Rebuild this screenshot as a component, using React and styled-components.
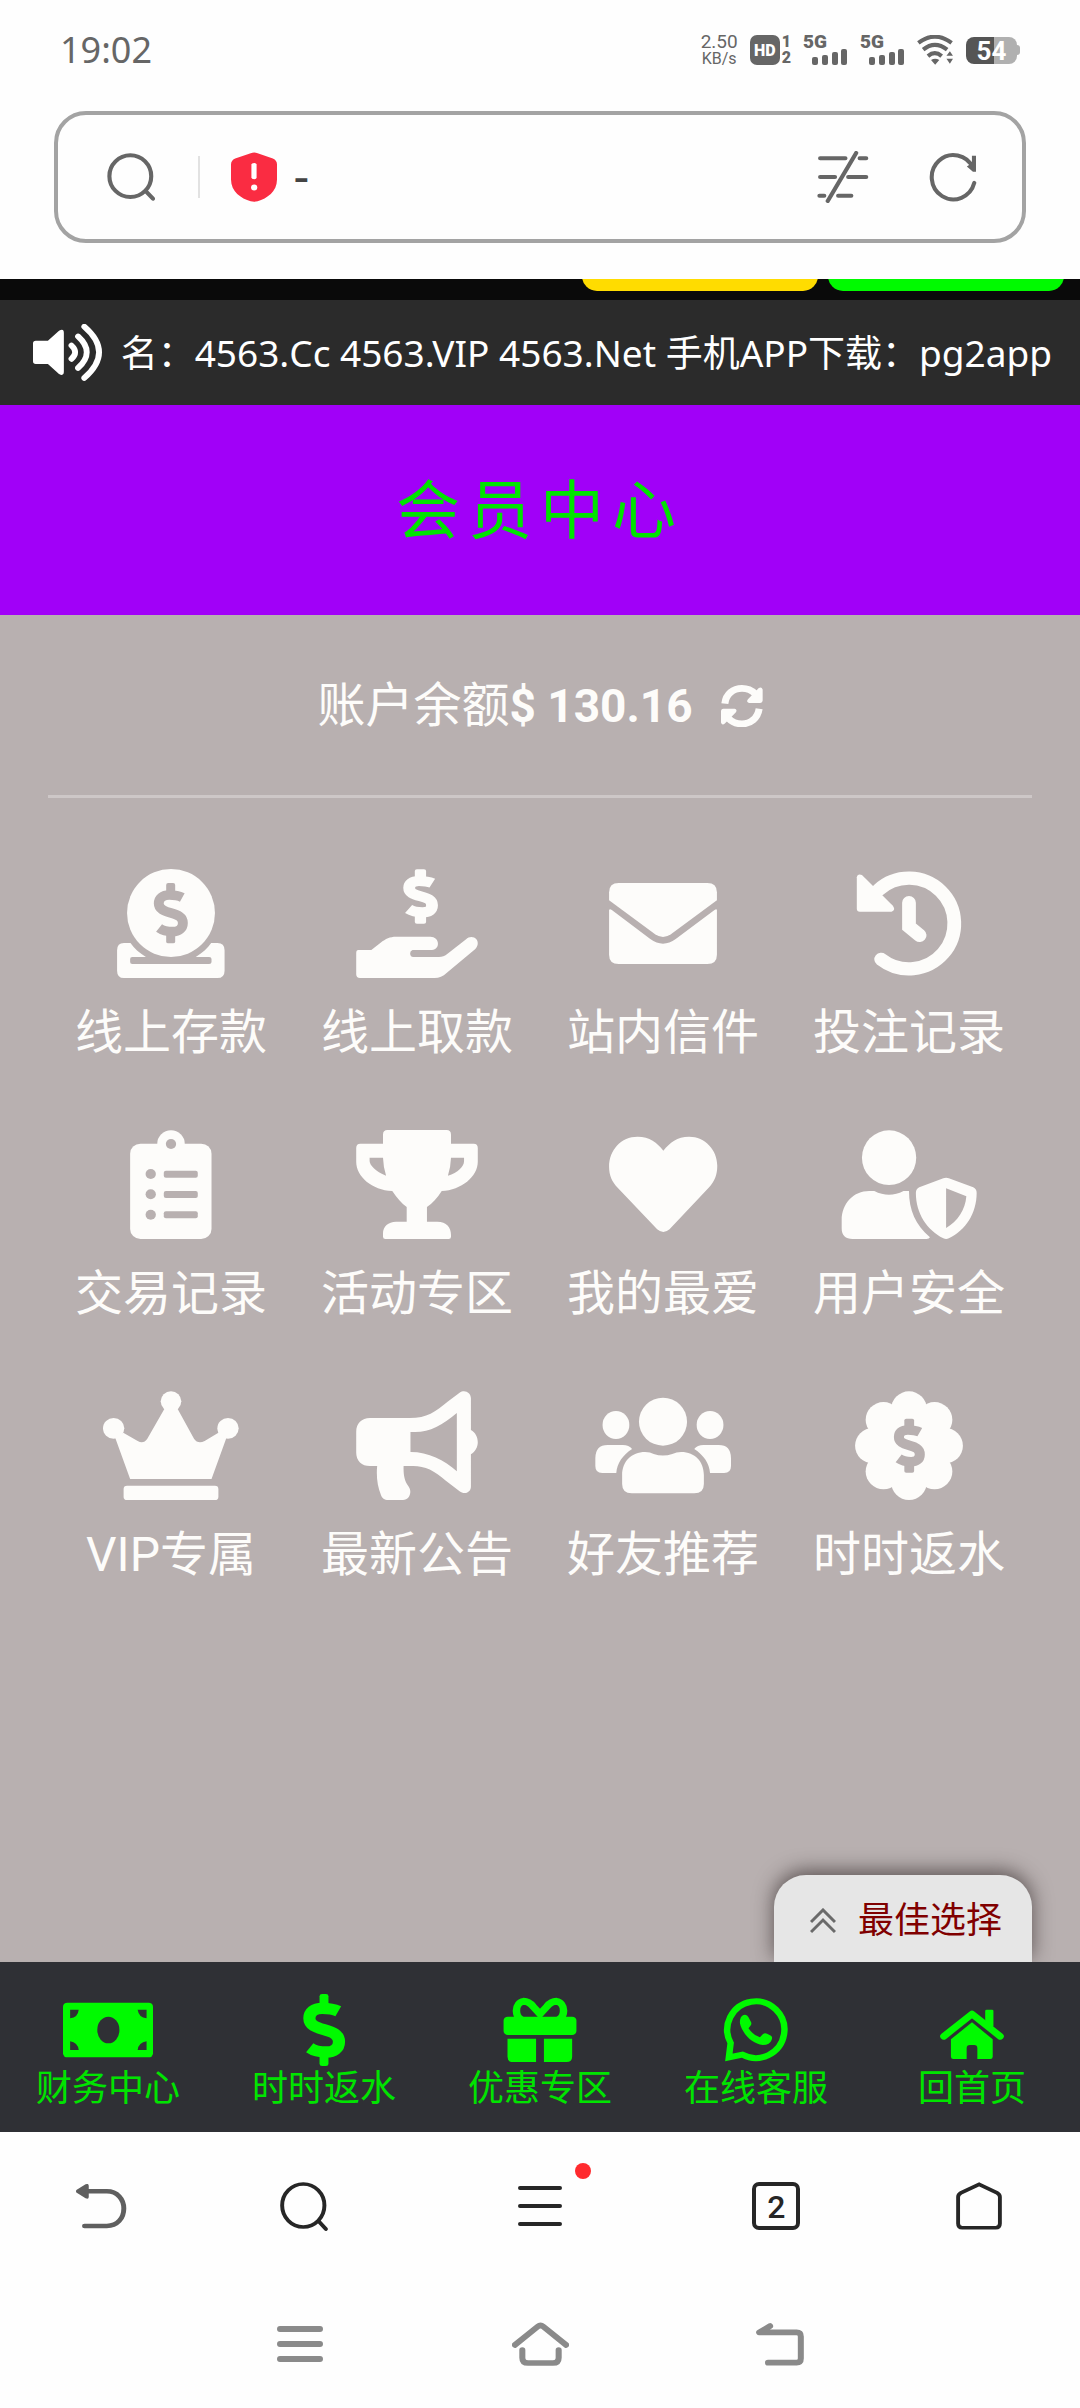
import React from "react";
import styled, { createGlobalStyle } from "styled-components";

const color = {
  panel: "#b8b0b0",
  ivory: "#fdfcfa",
  neon: "#00fa00",
  neonText: "#00e400",
  status: "#666666",
  ink: "#262626",
  system: "#8a8a8a",
};

const GlobalStyle = createGlobalStyle`
  *, *::before, *::after { box-sizing: border-box; }
  body {
    margin: 0;
    background: #fefefe;
    font-family: Roboto, "Noto Sans CJK SC", sans-serif;
  }
  button { font: inherit; color: inherit; background: none; border: 0; padding: 0; cursor: pointer; }
  a { color: inherit; text-decoration: none; }
  svg { display: block; flex: none; }
`;

const Screen = styled.div`
  display: flex;
  flex-direction: column;
  min-height: 100vh;
`;

/* ---------- status bar ---------- */

const StatusBar = styled.header`
  display: flex;
  align-items: center;
  justify-content: space-between;
  height: 100px;
  padding: 0 60px;
  color: ${color.status};
`;

const Clock = styled.time`
  font-family: "Noto Sans", sans-serif;
  font-size: 36px;
  line-height: 40px;
`;

const StatusIcons = styled.div`
  display: flex;
  align-items: center;
  gap: 12px;
`;

const NetSpeed = styled.div`
  display: flex;
  flex-direction: column;
  align-items: center;
  font-size: 19px;
  line-height: 18px;
  small { font-size: 16px; line-height: 16px; }
`;

const HdGroup = styled.div`
  display: flex;
  align-items: center;
  gap: 2px;
`;

const HdBadge = styled.span`
  width: 30px;
  height: 30px;
  border-radius: 7px;
  background: ${color.status};
  color: #fff;
  font-size: 16px;
  font-weight: 900;
  line-height: 31px;
  text-align: center;
`;

const SimNumbers = styled.span`
  display: flex;
  flex-direction: column;
  align-items: center;
  font-size: 16px;
  font-weight: 900;
  line-height: 16px;
`;

const SignalBox = styled.div`
  display: flex;
  flex-direction: column;
  width: 45px;
  height: 30px;
  font-size: 19px;
  font-weight: 900;
  line-height: 14px;
  svg { align-self: flex-end; }
`;

const Battery = styled.div`
  display: flex;
  align-items: center;
  &::after {
    content: "";
    width: 3px;
    height: 10px;
    border-radius: 0 3px 3px 0;
    background: #b0b0b0;
  }
`;

const BatteryBody = styled.span`
  width: 51px;
  height: 27px;
  border-radius: 8px;
  background: linear-gradient(90deg, #555 54%, #b0b0b0 54%);
  color: #fff;
  font-size: 26px;
  font-weight: 700;
  line-height: 28px;
  text-align: center;
`;

/* ---------- address bar ---------- */

const AddressRow = styled.div`
  padding: 11px 54px 36px;
`;

const AddressBar = styled.form`
  display: flex;
  align-items: center;
  height: 132px;
  padding: 0 45px 0 49px;
  border: 4px solid #a3a3a3;
  border-radius: 32px;
  color: ${color.status};
`;

const AddressDivider = styled.span`
  width: 2px;
  height: 42px;
  margin: 0 31px 0 43px;
  background: #e2e2e2;
`;

const AddressInput = styled.input`
  flex: 1;
  min-width: 0;
  padding: 2px 16px 0;
  border: 0;
  outline: 0;
  background: none;
  color: #444;
  font: 600 36px/48px Inter, sans-serif;
`;

const AddressActions = styled.div`
  display: flex;
  gap: 60px;
`;

/* ---------- page top ---------- */

const PromoStrip = styled.div`
  display: flex;
  justify-content: flex-end;
  align-items: flex-end;
  gap: 10px;
  height: 21px;
  padding: 0 16px 9px;
  overflow: hidden;
  background: #0a0a0a;
`;

const PromoEdge = styled.span`
  width: 236px;
  height: 48px;
  flex: none;
  border-radius: 15px;
  background: ${(p) => p.$tone};
`;

const Notice = styled.div`
  display: flex;
  align-items: center;
  gap: 12px;
  height: 105px;
  padding: 0 28px 0 33px;
  background: #2b2b2b;
  color: #fff;
`;

const NoticeText = styled.p`
  flex: 1;
  display: flex;
  justify-content: flex-end;
  margin: 0;
  font-family: "Noto Sans", "Noto Sans CJK SC", sans-serif;
  font-size: 37px;
  line-height: 52px;
  white-space: nowrap;
`;

const TitleBar = styled.div`
  display: flex;
  align-items: center;
  justify-content: center;
  height: 210px;
  padding-top: 4px;
  background: #a100f8;
`;

const Title = styled.h1`
  margin: 0;
  color: ${color.neonText};
  font-size: 64px;
  font-weight: 400;
  line-height: 80px;
  letter-spacing: 8px;
`;

/* ---------- member panel ---------- */

const Panel = styled.main`
  flex: 1;
  display: flex;
  flex-direction: column;
  padding: 0 48px;
  overflow: hidden;
  background: ${color.panel};
  color: ${color.ivory};
`;

const Balance = styled.section`
  display: flex;
  align-items: center;
  justify-content: center;
  padding: 61px 0 59px;
  border-bottom: 3px solid #cdc7c7;
  font-size: 48px;
  line-height: 60px;
  strong { font-size: 46px; font-weight: 700; }
  button { margin-left: 28px; }
`;

const MenuGrid = styled.nav`
  display: grid;
  grid-template-columns: repeat(4, 1fr);
  row-gap: 67px;
  padding-top: 71px;
`;

const MenuItem = styled.a`
  display: flex;
  flex-direction: column;
  align-items: center;
  gap: 25px;
  font-size: 48px;
  line-height: 60px;
  white-space: nowrap;
`;

const PickTab = styled.button`
  display: flex;
  align-items: center;
  gap: 22px;
  height: 87px;
  margin-top: auto;
  align-self: flex-end;
  && {
    padding: 5px 30px 0 36px;
    background: #e6e6e6;
    color: #800000;
    font-size: 36px;
    line-height: 48px;
  }
  border-radius: 32px 32px 0 0;
  box-shadow: 0 -4px 20px rgba(40, 30, 30, 0.65);
`;

/* ---------- site tab bar ---------- */

const SiteTabs = styled.nav`
  display: grid;
  grid-template-columns: repeat(5, 1fr);
  padding: 32px 0 22px;
  background: #2f3035;
`;

const SiteTab = styled.a`
  display: flex;
  flex-direction: column;
  align-items: center;
  gap: 2px;
  color: ${color.neonText};
  font-size: 36px;
  line-height: 42px;
  svg { color: ${color.neon}; }
`;

/* ---------- browser and system bars ---------- */

const BrowserBar = styled.nav`
  display: grid;
  grid-template-columns: 3fr 3fr 4fr 3fr 3fr;
  place-items: center;
  height: 148px;
  color: ${color.ink};
`;

const BarButton = styled.button`
  display: grid;
  place-items: center;
  position: relative;
  width: 104px;
  height: 88px;
`;

const Dot = styled.span`
  position: absolute;
  top: 1px;
  right: 1px;
  width: 16px;
  height: 16px;
  border-radius: 50%;
  background: #ff2a2e;
`;

const TabCount = styled.span`
  width: 48px;
  height: 48px;
  border: 4px solid ${color.ink};
  border-radius: 7px;
  font-size: 32px;
  font-weight: 500;
  line-height: 42px;
  text-align: center;
`;

const SystemBar = styled.nav`
  display: grid;
  grid-template-columns: repeat(3, 1fr);
  place-items: center;
  height: 128px;
  padding: 0 calc(100% / 6);
  color: ${color.system};
`;

/* ---------- drawings ---------- */

const stroke = (width, cap = "round") => ({
  fill: "none",
  stroke: "currentColor",
  strokeWidth: width,
  strokeLinecap: cap,
});

const Drawing = ({ box, w, h, children }) => (
  <svg viewBox={box} width={w} height={h} preserveAspectRatio="none" fill="currentColor" aria-hidden="true">
    {children}
  </svg>
);

const MenuDrawing = ({ box, children }) => (
  <Drawing box={`${box} 396 327`} w={136} h={109}>{children}</Drawing>
);

const TabDrawing = ({ box, children }) => (
  <Drawing box={`${box} 162 252 216`} w={90} h={72}>{children}</Drawing>
);

/* Dollar sign in a 117 x 216 cell; t is the curve's thickness, bar the stem's. */
const Dollar = ({ x, y, sx = 1, sy = 1, t = 34, bar = 25, tone = "currentColor" }) => {
  const l = t / 2;
  const r = 117 - l;
  const top = 26 + l;
  const bottom = 191 - l;
  return (
    <g transform={`translate(${x} ${y}) scale(${sx} ${sy})`}>
      <rect x={58 - bar / 2} y="0" width={bar} height="50" rx="7" fill={tone} />
      <rect x={58 - bar / 2} y="166" width={bar} height="50" rx="7" fill={tone} />
      <path
        d={`M98 ${top + 9} C85 ${top + 2} 70 ${top} 53 ${top} C30 ${top} ${l} ${top + 12} ${l} 73 C${l} 93 35 100 58 107 C82 114 ${r} 121 ${r} 143 C${r} 163 85 ${bottom} 65 ${bottom} C45 ${bottom} 30 ${bottom - 4} 18 ${bottom - 13}`}
        fill="none"
        stroke={tone}
        strokeWidth={t}
      />
    </g>
  );
};

const DepositIcon = () => (
  <MenuDrawing box="299 687">
    <ellipse cx="497" cy="819" rx="128" ry="132" />
    <Dollar x={447} y={729} sx={0.846} sy={0.838} bar={31} tone={color.panel} />
    <path d="M360 909H379C389 925 405 939 424 951H384Q378 951 378 957V966Q378 972 384 972H608Q615 972 615 966V957Q615 951 608 951H569C588 939 604 925 614 909H632Q653 909 653 931V992Q653 1014 632 1014H360Q340 1014 340 992V931Q340 909 360 909Z" />
  </MenuDrawing>
);

const WithdrawIcon = () => (
  <MenuDrawing box="1013 687">
    <Dollar x={1171} y={688} sx={0.863} sy={0.755} t={40} bar={38} />
    <path d="M1040 930H1078L1105 908C1120 896 1132 890 1150 890H1250C1263 890 1272 899 1272 911C1272 923 1263 930 1250 930H1198Q1191 932 1191 940Q1191 951 1200 951H1275C1285 951 1291 949 1298 943L1354 898C1362 889 1376 888 1384 898C1391 908 1388 920 1380 928L1298 998C1286 1009 1276 1014 1262 1014H1045Q1034 1014 1034 1003V940Q1034 930 1040 930Z" />
  </MenuDrawing>
);

const MailIcon = () => (
  <MenuDrawing box="159 687">
    <path d="M228 729H486Q514 729 514 757V781L380 883Q357 899 334 883L200 781V757Q200 729 228 729Z" />
    <path d="M200 810Q202 805 208 810L320 897Q357 925 394 897L507 810Q513 805 514 810V944Q514 972 486 972H228Q200 972 200 944Z" />
  </MenuDrawing>
);

const HistoryIcon = () => (
  <MenuDrawing box="873 687">
    <path d="M982 750A132 136 0 1 1 990 958" {...stroke(40)} />
    <path d="M919 712Q921 700 934 705L1024 797Q1033 810 1020 815H928Q919 815 919 806Z" />
    <path d="M1071 788V860L1102 886" {...stroke(40)} />
  </MenuDrawing>
);

const RecordIcon = () => (
  <MenuDrawing box="299 90">
    <rect x="378" y="131" width="237" height="286" rx="30" />
    <circle cx="497" cy="131" r="40" />
    <g fill={color.panel}>
      <circle cx="497" cy="132" r="15" />
      {[222, 283, 344].map((y) => (
        <React.Fragment key={y}>
          <circle cx="438" cy={y} r="15" />
          <rect x="476" y={y - 10} width="99" height="21" rx="6" />
        </React.Fragment>
      ))}
    </g>
  </MenuDrawing>
);

const TrophyIcon = () => (
  <MenuDrawing box="1013 90">
    <path
      fillRule="evenodd"
      d="M1125 90H1297Q1310 90 1310 104V131H1376Q1388 131 1388 144V185C1388 230 1340 270 1283 273C1270 295 1256 310 1240 321V365H1270C1297 365 1310 382 1310 405V410Q1310 417 1303 417H1119Q1112 417 1112 410V400C1112 380 1127 365 1150 365H1181V321C1166 310 1153 295 1139 273C1080 270 1034 230 1034 185V144Q1034 131 1046 131H1112V104Q1112 90 1125 90ZM1073 173H1112Q1113 202 1121 227C1090 215 1073 195 1073 183ZM1310 173H1348V183C1348 200 1330 218 1301 227Q1309 202 1310 173Z"
    />
  </MenuDrawing>
);

const HeartIcon = () => (
  <MenuDrawing box="159 90">
    <path d="M358 152C340 128 318 110 283 110C235 110 200 150 200 200C200 225 208 245 225 263L340 388Q358 404 376 388L490 263C507 245 515 225 515 197C515 150 480 110 433 110C398 110 377 128 358 152Z" />
  </MenuDrawing>
);

const UserShieldIcon = () => (
  <MenuDrawing box="873 90">
    <ellipse cx="1013" cy="173" rx="79" ry="82" />
    <path d="M955 273H970Q1013 296 1055 273H1071C1071 330 1090 375 1132 412Q1130 417 1122 417H907Q875 417 875 385V360C875 310 910 273 955 273Z" />
    <path
      fillRule="evenodd"
      d="M1171 235Q1179 231 1187 235L1258 262Q1268 267 1268 279C1268 340 1235 392 1187 415Q1179 419 1171 415C1123 390 1091 340 1091 279Q1091 267 1101 262ZM1179 265L1238 289C1235 330 1212 365 1179 384Z"
    />
  </MenuDrawing>
);

const CrownIcon = () => (
  <MenuDrawing box="299 873">
    <circle cx="497" cy="904" r="30" />
    <circle cx="330" cy="985" r="31" />
    <circle cx="663" cy="985" r="31" />
    <path d="M478 926L428 1016Q417 1033 400 1023L358 998L334 1012L378 1137H615L659 1012L635 998L595 1023Q575 1033 564 1016L516 926Z" />
    <rect x="359" y="1157" width="276" height="43" rx="10" />
  </MenuDrawing>
);

const MegaphoneIcon = () => (
  <MenuDrawing box="1013 873">
    <path
      fillRule="evenodd"
      d="M1074 954H1190C1240 954 1265 935 1300 905L1335 878C1350 867 1368 878 1368 895V990C1381 997 1388 1012 1388 1027C1388 1042 1381 1055 1368 1063V1160C1368 1176 1350 1186 1335 1174L1295 1142C1262 1112 1235 1098 1200 1098H1172C1171 1125 1175 1145 1187 1160C1197 1175 1190 1200 1170 1200H1128C1115 1200 1110 1195 1106 1185C1096 1160 1092 1130 1095 1098H1074C1050 1098 1034 1082 1034 1058V995C1034 970 1050 954 1074 954ZM1192 996V1056C1245 1056 1290 1080 1327 1114V939C1285 975 1250 996 1205 996Z"
    />
  </MenuDrawing>
);

const FriendsIcon = () => (
  <MenuDrawing box="159 873">
    <ellipse cx="357" cy="965" rx="70" ry="72" />
    <ellipse cx="220" cy="975" rx="39" ry="42" />
    <ellipse cx="494" cy="975" rx="39" ry="42" />
    <path d="M305 1056Q320 1056 330 1062Q357 1071 384 1062Q396 1056 410 1056C450 1056 476 1085 476 1125V1152Q476 1180 448 1180H266Q238 1180 238 1152V1125C238 1085 265 1056 305 1056Z" />
    <path d="M196 1035H240Q258 1035 267 1047C240 1065 223 1090 221 1119H180Q160 1119 160 1098V1075Q160 1035 196 1035Z" />
    <path d="M519 1035H475Q457 1035 448 1047C475 1065 492 1090 494 1119H535Q555 1119 555 1098V1075Q555 1035 519 1035Z" />
  </MenuDrawing>
);

const RebateIcon = () => (
  <MenuDrawing box="873 873">
    <ellipse cx="1071" cy="1037" rx="110" ry="114" />
    {[0, 45, 90, 135, 180, 225, 270, 315].map((deg) => (
      <ellipse
        key={deg}
        cx={1071 + 105 * Math.cos((deg * Math.PI) / 180)}
        cy={1037 + 110 * Math.sin((deg * Math.PI) / 180)}
        rx="52"
        ry="53"
      />
    ))}
    <Dollar x={1027} y={956} sx={0.77} sy={0.75} t={38} bar={37} tone={color.panel} />
  </MenuDrawing>
);

const CashIcon = () => (
  <TabDrawing box="176">
    <rect x="176" y="188" width="252" height="164" rx="12" />
    <g fill="#2f3035">
      <ellipse cx="303" cy="270" rx="31" ry="40" />
      <path d="M196 209H220Q218 232 196 235ZM410 209H385Q388 232 410 235ZM196 330V304Q217 307 220 330ZM410 330V304Q388 307 385 330Z" />
    </g>
  </TabDrawing>
);

const DollarIcon = () => (
  <TabDrawing box="781">
    <Dollar x={849} y={162} />
  </TabDrawing>
);

const GiftIcon = () => (
  <TabDrawing box="-70">
    <rect x="-46" y="230" width="204" height="55" rx="12" />
    <path d="M-35 296H45V366H-20Q-35 366 -35 350ZM67 296H146V350Q146 366 130 366H67Z" />
    <path d="M56 222L75 200C84 188 92 184 102 184C114 186 122 198 122 212C122 224 118 232 110 238M56 222L37 200C28 188 20 184 10 184C-2 186 -10 198 -10 212C-10 224 -6 232 2 238" {...stroke(21)} />
  </TabDrawing>
);

const ChatIcon = () => (
  <TabDrawing box="535">
    <path d="M590 309A80 85 0 1 1 623 344L585 352Z" {...stroke(18)} />
    <path d="M626 225Q636 222 640 232L647 246Q650 252 645 258L640 265Q652 285 672 292L680 283Q685 278 692 281L703 287Q708 291 705 299Q700 315 680 315C650 312 622 280 616 250Q615 230 626 225Z" />
  </TabDrawing>
);

const HouseIcon = () => (
  <TabDrawing box="1140">
    <path d="M1187 289L1266 222L1345 289" {...stroke(20)} strokeLinejoin="round" />
    <rect x="1303" y="209" width="23" height="52" rx="4" />
    <path d="M1207 298L1266 247L1324 298V350Q1324 357 1317 357H1281V325Q1281 315 1272 315H1260Q1251 315 1251 325V357H1214Q1207 357 1207 350Z" />
  </TabDrawing>
);

const SpeakerIcon = () => (
  <Drawing box="97 166 199 170" w={69} h={57}>
    <path d="M105 216H140L172 186Q186 178 186 192V308Q186 323 172 315L140 285H105Q97 285 97 277V224Q97 216 105 216Z" />
    <path d="M208 230Q229 250 208 270M227 203Q277 250 227 297M245 174Q330 250 245 327" {...stroke(17)} />
  </Drawing>
);

const RefreshIcon = () => (
  <Drawing box="520 134 120 124" w={42} h={42}>
    <path d="M531 189C534 160 555 144 580 144C597 144 608 150 618 160M629 204C625 232 604 249 580 249C563 249 551 243 541 232" {...stroke(20, "butt")} />
    <path d="M639 147V180Q639 187 632 187H600Q591 184 597 176L628 143Q636 138 639 147ZM520 245V212Q520 204 527 204H559Q568 207 562 215L531 248Q523 255 520 245Z" />
  </Drawing>
);

const ChevronsIcon = () => (
  <Drawing box="0 0 26 26" w={26} h={26}>
    <path d="M1 14L13 2L25 14M1 24L13 12L25 24" {...stroke(3, "butt")} stroke="#6a6a6a" />
  </Drawing>
);

const SearchIcon = () => (
  <Drawing box="310 455 140 145" w={48} h={48}>
    <ellipse cx="378" cy="525" rx="61" ry="63" {...stroke(12)} />
    <path d="M423 570L444 593" {...stroke(12)} />
  </Drawing>
);

const ShieldIcon = () => (
  <Drawing box="671 455 133 151" w={46} h={50}>
    <path fill="#fa2c42" d="M728 459Q738 454 748 459L792 475Q804 481 804 493V538C804 575 775 595 748 604Q738 607 728 604C700 595 671 575 671 538V493Q671 481 683 475Z" />
    <path d="M730 493Q730 488 738 488Q745 488 745 493V532Q745 537 738 537Q730 537 730 532Z" fill="#fff" />
    <circle cx="738" cy="562" r="9" fill="#fff" />
  </Drawing>
);

const ReaderOffIcon = () => (
  <Drawing box="804 452 150 158" w={52} h={52}>
    <path d="M813 474H886M927 474H946M813 531H856M894 531H946M811 588H825M865 588H903M917 458L835 604" {...stroke(12)} />
  </Drawing>
);

const ReloadIcon = () => (
  <Drawing box="1130 457 142 149" w={48} h={50}>
    <path d="M1260 504A64 66 0 1 0 1264 549" {...stroke(12)} />
    <path d="M1257 468H1269V516H1260L1242 500L1257 490Z" />
  </Drawing>
);

const SignalBars = () => (
  <svg viewBox="0 0 36 16" width="36" height="16" fill="currentColor" aria-hidden="true">
    <rect x="0" y="8" width="6" height="8" rx="2" />
    <rect x="10" y="6" width="6" height="10" rx="2" />
    <rect x="20" y="3" width="6" height="13" rx="2" />
    <rect x="29" y="0" width="6" height="16" rx="2" />
  </svg>
);

const WifiIcon = () => (
  <Drawing box="1098 105 108 88" w={37} h={30}>
    <path d="M1102 128Q1150 92 1199 128M1116 148Q1150 120 1186 148M1130 167Q1150 150 1170 167" {...stroke(12, "butt")} />
    <path d="M1139 178Q1151 172 1163 178L1151 192ZM1184 166L1194 153L1203 166ZM1184 175H1203L1194 189Z" />
  </Drawing>
);

const BackIcon = () => (
  <Drawing box="213 729 144 136" w={51} h={45}>
    <g color="#5f5f5f">
      <path d="M214 747L240 730Q249 726 249 735V768Q249 776 240 772L214 755Q212 751 214 747Z" fill="currentColor" />
      <path d="M245 751H300C330 751 348 775 348 803C348 832 330 856 300 856H237" {...stroke(14)} />
    </g>
  </Drawing>
);

const BarSearchIcon = () => (
  <Drawing box="783 728 134 146" w={48} h={49}>
    <ellipse cx="848" cy="798" rx="59" ry="64" {...stroke(11)} />
    <path d="M891 845L911 868" {...stroke(11)} />
  </Drawing>
);

const MenuLinesIcon = () => (
  <Drawing box="0 0 44 40" w={44} h={40}>
    <path d="M2 2H42M2 20H42M2 38H42" {...stroke(4)} />
  </Drawing>
);

const BarHomeIcon = () => (
  <Drawing box="1220 722 131 146" w={46} h={48}>
    <path d="M1286 729L1337 755Q1345 760 1345 768V848Q1345 861 1333 861H1238Q1226 861 1226 848V768Q1226 760 1234 755Z" {...stroke(11)} />
  </Drawing>
);

const SystemRecentsIcon = () => (
  <Drawing box="0 0 46 36" w={46} h={36}>
    <path d="M3 3H43M3 18H43M3 33H43" {...stroke(6)} />
  </Drawing>
);

const SystemHomeIcon = () => (
  <Drawing box="1432 1138 160 132" w={57} h={44}>
    <path d="M1440 1207L1504 1152Q1512 1145 1520 1152L1584 1207M1461 1222V1245Q1461 1261 1477 1261H1547Q1563 1261 1563 1245V1222" {...stroke(17)} />
  </Drawing>
);

const SystemBackIcon = () => (
  <Drawing box="660 1142 136 128" w={48} h={43}>
    <path d="M700 1151L669 1170H775Q787 1170 787 1182V1248Q787 1260 775 1260H694" {...stroke(17)} strokeLinejoin="round" />
  </Drawing>
);

/* ---------- content ---------- */

const menu = [
  ["线上存款", DepositIcon],
  ["线上取款", WithdrawIcon],
  ["站内信件", MailIcon],
  ["投注记录", HistoryIcon],
  ["交易记录", RecordIcon],
  ["活动专区", TrophyIcon],
  ["我的最爱", HeartIcon],
  ["用户安全", UserShieldIcon],
  ["VIP专属", CrownIcon],
  ["最新公告", MegaphoneIcon],
  ["好友推荐", FriendsIcon],
  ["时时返水", RebateIcon],
];

const tabs = [
  ["财务中心", CashIcon],
  ["时时返水", DollarIcon],
  ["优惠专区", GiftIcon],
  ["在线客服", ChatIcon],
  ["回首页", HouseIcon],
];

const Signal = () => (
  <SignalBox>
    5G
    <SignalBars />
  </SignalBox>
);

export default function App() {
  return (
    <Screen>
      <GlobalStyle />

      <StatusBar>
        <Clock>19:02</Clock>
        <StatusIcons>
          <NetSpeed>
            2.50
            <small>KB/s</small>
          </NetSpeed>
          <HdGroup>
            <HdBadge>HD</HdBadge>
            <SimNumbers>
              <span>1</span>
              <span>2</span>
            </SimNumbers>
          </HdGroup>
          <Signal />
          <Signal />
          <WifiIcon />
          <Battery>
            <BatteryBody>54</BatteryBody>
          </Battery>
        </StatusIcons>
      </StatusBar>

      <AddressRow>
        <AddressBar onSubmit={(e) => e.preventDefault()}>
          <button type="submit" aria-label="搜索"><SearchIcon /></button>
          <AddressDivider />
          <ShieldIcon />
          <AddressInput aria-label="网址" defaultValue="-" />
          <AddressActions>
            <button type="button" aria-label="阅读模式"><ReaderOffIcon /></button>
            <button type="button" aria-label="刷新"><ReloadIcon /></button>
          </AddressActions>
        </AddressBar>
      </AddressRow>

      <PromoStrip>
        <PromoEdge $tone="#ffdc00" />
        <PromoEdge $tone="#00fa00" />
      </PromoStrip>

      <Notice>
        <SpeakerIcon />
        <NoticeText>名：4563.Cc 4563.VIP 4563.Net 手机APP下载：pg2app</NoticeText>
      </Notice>

      <TitleBar>
        <Title>会员中心</Title>
      </TitleBar>

      <Panel>
        <Balance>
          <span>账户余额</span>
          <strong>$ 130.16</strong>
          <button type="button" aria-label="刷新余额"><RefreshIcon /></button>
        </Balance>
        <MenuGrid>
          {menu.map(([label, Icon]) => (
            <MenuItem href="#" key={label}>
              <Icon />
              {label}
            </MenuItem>
          ))}
        </MenuGrid>
        <PickTab type="button">
          <ChevronsIcon />
          最佳选择
        </PickTab>
      </Panel>

      <SiteTabs>
        {tabs.map(([label, Icon]) => (
          <SiteTab href="#" key={label}>
            <Icon />
            {label}
          </SiteTab>
        ))}
      </SiteTabs>

      <BrowserBar>
        <BarButton aria-label="后退"><BackIcon /></BarButton>
        <BarButton aria-label="搜索"><BarSearchIcon /></BarButton>
        <BarButton aria-label="菜单">
          <MenuLinesIcon />
          <Dot />
        </BarButton>
        <BarButton aria-label="标签页"><TabCount>2</TabCount></BarButton>
        <BarButton aria-label="主页"><BarHomeIcon /></BarButton>
      </BrowserBar>

      <SystemBar>
        <BarButton aria-label="最近任务"><SystemRecentsIcon /></BarButton>
        <BarButton aria-label="桌面"><SystemHomeIcon /></BarButton>
        <BarButton aria-label="返回"><SystemBackIcon /></BarButton>
      </SystemBar>
    </Screen>
  );
}
